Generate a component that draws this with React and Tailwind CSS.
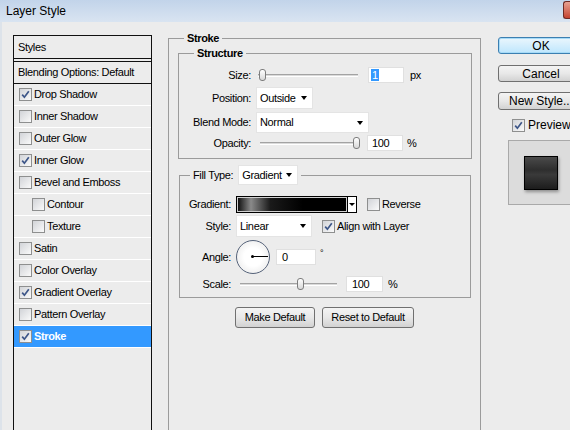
import React from "react";

// Photoshop "Layer Style" dialog, Stroke page

const styleRows = [
  { name: "Drop Shadow", on: true },
  { name: "Inner Shadow", on: false },
  { name: "Outer Glow", on: false },
  { name: "Inner Glow", on: true },
  { name: "Bevel and Emboss", on: false },
  { name: "Contour", on: false, sub: true },
  { name: "Texture", on: false, sub: true },
  { name: "Satin", on: false },
  { name: "Color Overlay", on: false },
  { name: "Gradient Overlay", on: true },
  { name: "Pattern Overlay", on: false },
  { name: "Stroke", on: true, active: true },
];

const Check = ({ on }) => (
  <span className="flex w-[13px] h-[13px] shrink-0 items-center justify-center border border-[#8e8f8f] bg-linear-to-br from-[#d2d4d8] to-[#fafafa]">
    {on && (
      <svg width="9" height="9" viewBox="0 0 9 9">
        <path d="M1.2 4.6 L3.4 7.2 L7.8 1.2" fill="none" stroke="#3d5688" strokeWidth="1.7" />
      </svg>
    )}
  </span>
);

const Arrow = () => (
  <span className="w-0 h-0 border-x-[3.5px] border-t-[4px] border-x-transparent border-t-black" />
);

const Select = ({ value, className }) => (
  <div className={`flex items-center justify-between bg-white border border-[#e4e4e4] pl-[3px] pr-[5px] shrink-0 ${className}`}>
    <span>{value}</span>
    <Arrow />
  </div>
);

const Slider = ({ className, pos }) => (
  <div className={`relative h-[14px] shrink-0 ${className}`}>
    <div className="absolute left-0 right-0 top-[6px] h-[3px] border-t border-[#a3a3a3] border-b border-b-white bg-[#dadada]" />
    <div
      className="absolute top-[1px] w-[7px] h-[12px] rounded-[3px] border border-[#7d7d7d] bg-linear-to-b from-white to-[#d8d8d8]"
      style={{ left: pos }}
    />
  </div>
);

const Field = ({ children, className }) => (
  <div className={`flex items-center h-[16px] bg-white border border-[#e0e0e0] shrink-0 ${className}`}>
    {children}
  </div>
);

const Btn = ({ children, className }) => (
  <div className={`flex items-center justify-center rounded-[3px] border border-[#707070] bg-linear-to-b from-[#f4f4f4] via-[#e8e8e8] to-[#d2d2d2] shrink-0 ${className}`}>
    {children}
  </div>
);

export default function App() {
  return (
    <div className="w-[570px] h-[430px] overflow-hidden bg-[#ececec] text-[11px] leading-[13px] text-black font-['Liberation_Sans',Arial,sans-serif] tracking-[-0.35px]">
      {/* title bar */}
      <div className="flex justify-between h-[22px] bg-linear-to-b from-[#c2d4ea] to-[#d9e4f1]">
        <span className="pl-[6px] pt-[4px] text-[12px] leading-[14px] tracking-normal">Layer Style</span>
        <span className="mt-[1px] w-[7px] h-[18px] rounded-l-[3px] border border-r-0 border-[#6e2b25] bg-linear-to-b from-[#e6a091] to-[#c4412f]" />
      </div>

      <div className="flex h-[408px] border-l-[2px] border-[#dde3ea]">
        {/* styles list */}
        <div className="ml-[11px] mt-[13px] w-[139px] h-[420px] shrink-0 border border-[#111]">
          <div className="h-[23px] pl-[4px] flex items-center border-b border-[#111]">Styles</div>
          <div className="h-[2px]" />
          <div className="h-[23px] pl-[4px] flex items-center border-t border-b border-[#111]">Blending Options: Default</div>
          {styleRows.map((r) => (
            <div
              key={r.name}
              className={`h-[22px] flex items-center gap-[2px] border-b border-white ${r.sub ? "pl-[18px]" : "pl-[5px]"} ${r.active ? "bg-[#3399ff] text-white font-bold" : ""}`}
            >
              <Check on={r.on} />
              <span>{r.name}</span>
            </div>
          ))}
        </div>

        {/* stroke page */}
        <fieldset className="ml-[16px] mt-[10px] w-[313px] h-[430px] shrink-0 border border-[#9b9b9b] p-0 min-w-0">
          <legend className="ml-[15px] px-[3px] font-bold">Stroke</legend>

          <fieldset className="ml-[9px] mt-[2px] w-[294px] border border-[#9b9b9b] p-0 pt-[7px] pb-[7px] min-w-0">
            <legend className="ml-[15px] px-[3px] font-bold">Structure</legend>
            <div className="flex items-center h-[16px]">
              <span className="w-[72px] text-right shrink-0">Size:</span>
              <Slider className="ml-[7px] w-[100px]" pos={1} />
              <Field className="ml-[10px] w-[36px] pl-[2px]">
                <span className="bg-[#3399ff] text-white px-[1px] leading-[12px]">1</span>
              </Field>
              <span className="ml-[6px]">px</span>
            </div>
            <div className="flex items-center h-[22px] mt-[4px]">
              <span className="w-[72px] text-right shrink-0">Position:</span>
              <Select value="Outside" className="ml-[5px] w-[57px] h-[22px]" />
            </div>
            <div className="flex items-center h-[21px] mt-[3px]">
              <span className="w-[72px] text-right shrink-0">Blend Mode:</span>
              <Select value="Normal" className="ml-[5px] w-[113px] h-[21px]" />
            </div>
            <div className="flex items-center h-[16px] mt-[2px]">
              <span className="w-[72px] text-right shrink-0">Opacity:</span>
              <Slider className="ml-[9px] w-[98px]" pos={93} />
              <Field className="ml-[9px] w-[36px] pl-[4px]">100</Field>
              <span className="ml-[4px]">%</span>
            </div>
          </fieldset>

          <fieldset className="ml-[10px] mt-[6px] w-[292px] border border-[#9b9b9b] p-0 pt-[11px] pb-[5px] min-w-0">
            <legend className="ml-[10px] px-[3px]">
              <span className="flex items-center gap-[5px]">
                <span>Fill Type:</span>
                <Select value="Gradient" className="w-[60px] h-[20px]" />
              </span>
            </legend>
            <div className="flex items-center h-[17px]">
              <span className="w-[51px] text-right shrink-0">Gradient:</span>
              <div className="ml-[5px] flex w-[121px] h-[17px] shrink-0 border border-black">
                <div className="flex-1 border border-[#d0d0d0] bg-[linear-gradient(to_right,#111_0%,#8a8a8a_12%,#1a1a1a_30%,#000_60%,#000_100%)]" />
                <div className="w-[9px] flex items-center justify-center bg-white border-l border-black">
                  <span className="w-0 h-0 border-x-[3px] border-t-[3px] border-x-transparent border-t-black" />
                </div>
              </div>
              <span className="ml-[10px]"><Check on={false} /></span>
              <span className="ml-[2px]">Reverse</span>
            </div>
            <div className="flex items-center h-[22px] mt-[2px]">
              <span className="w-[51px] text-right shrink-0">Style:</span>
              <Select value="Linear" className="ml-[5px] w-[76px] h-[22px]" />
              <span className="ml-[10px]"><Check on={true} /></span>
              <span className="ml-[2px]">Align with Layer</span>
            </div>
            <div className="flex items-center h-[34px] mt-[3px]">
              <span className="w-[51px] text-right shrink-0">Angle:</span>
              <div className="ml-[5px] relative w-[34px] h-[34px] shrink-0 rounded-full border-[1.5px] border-[#56637a] bg-[radial-gradient(circle,#ffffff_40%,#e4e4e4_100%)]">
                <span className="absolute left-[14px] top-[14px] w-[3px] h-[3px] rounded-full bg-black" />
                <span className="absolute left-[15px] top-[15px] w-[16px] h-px bg-black" />
              </div>
              <Field className="ml-[6px] w-[40px] pl-[5px]">0</Field>
              <span className="ml-[4px] self-start mt-[9px] text-[9px] leading-[9px]">°</span>
            </div>
            <div className="flex items-center h-[16px] mt-[2px]">
              <span className="w-[51px] text-right shrink-0">Scale:</span>
              <Slider className="ml-[9px] w-[97px]" pos={57} />
              <Field className="ml-[9px] w-[37px] pl-[5px]">100</Field>
              <span className="ml-[5px]">%</span>
            </div>
          </fieldset>

          <div className="flex justify-center gap-[7px] mt-[9px]">
            <Btn className="w-[80px] h-[21px]">Make Default</Btn>
            <Btn className="w-[92px] h-[21px]">Reset to Default</Btn>
          </div>
        </fieldset>

        {/* buttons and preview */}
        <div className="ml-[17px] mt-[15px] flex flex-col shrink-0 text-[12px] leading-[14px] tracking-normal">
          <div className="w-[86px] h-[17px] flex items-center justify-center rounded-[3px] border border-[#3c7fb1] bg-linear-to-b from-[#eaf6fd] to-[#bee6fd] shadow-[inset_0_0_0_1px_#a6dbf8]">OK</div>
          <Btn className="w-[86px] h-[17px] mt-[11px]">Cancel</Btn>
          <Btn className="w-[86px] h-[18px] mt-[10px]">New Style...</Btn>
          <div className="flex items-center mt-[8px] ml-[14px] gap-[3px]">
            <Check on={true} />
            <span>Preview</span>
          </div>
          <div className="ml-[10px] mt-[8px] w-[70px] h-[65px] flex items-center justify-start pl-[15px] border border-[#a9a9a9] bg-[#dcdcdc]">
            <div className="w-[34px] h-[34px] border border-black bg-[linear-gradient(to_bottom,#4a4a4a_0%,#2e2e2e_40%,#3a3a3a_55%,#1c1c1c_100%)] shadow-[1px_2px_3px_rgba(0,0,0,0.35)]" />
          </div>
        </div>
      </div>
    </div>
  );
}
